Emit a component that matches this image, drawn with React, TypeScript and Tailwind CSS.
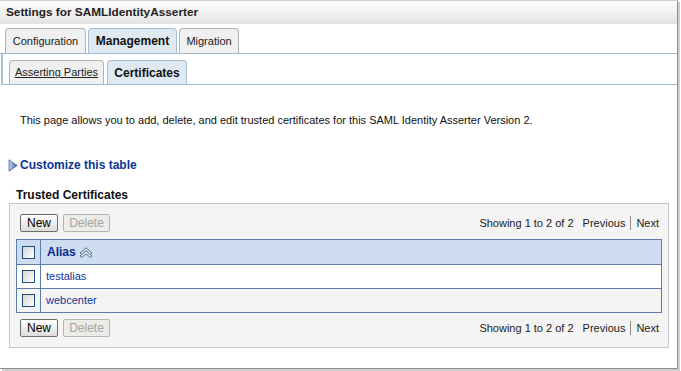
import React from "react";

function Checkbox() {
  return (
    <div className="w-[13px] h-[13px] border border-[#1c4f80] bg-linear-to-br from-[#d4d4ce] to-white" />
  );
}

function SortIcon() {
  return (
    <svg width="14" height="11" viewBox="0 0 14 11" className="ml-[3px]">
      <path d="M1 6 L7 0.8 L13 6 L11.3 7.6 L7 3.8 L2.7 7.6 Z" fill="#e4ebf5" stroke="#566f8e" strokeWidth="1" strokeLinejoin="round" />
      <path d="M1 9 L7 3.8 L13 9 L11.3 10.4 L7 6.8 L2.7 10.4 Z" fill="#e4ebf5" stroke="#566f8e" strokeWidth="1" strokeLinejoin="round" />
    </svg>
  );
}

function Triangle() {
  return (
    <svg width="10" height="13" viewBox="0 0 10 13">
      <defs>
        <linearGradient id="tg" x1="0" y1="0" x2="1" y2="0">
          <stop offset="0" stopColor="#c8d4ec" />
          <stop offset="1" stopColor="#3b5aa8" />
        </linearGradient>
      </defs>
      <path d="M1 0.8 L9.2 6.5 L1 12.2 Z" fill="url(#tg)" stroke="#4a64a8" strokeWidth="0.8" strokeLinejoin="round" />
    </svg>
  );
}

function Buttons() {
  return (
    <div className="flex gap-[5px]">
      <div className="w-[38px] h-[18px] border border-[#6e6e6e] rounded-[2px] bg-linear-to-b from-white to-[#dcdcd8] flex items-center justify-center text-[12px] text-black">
        New
      </div>
      <div className="w-[47px] h-[18px] border border-[#b4b4b0] rounded-[2px] bg-[#ecece8] flex items-center justify-center text-[12px] text-[#a4a4a4]">
        Delete
      </div>
    </div>
  );
}

function Paging() {
  return (
    <div className="flex items-center text-[11px] text-[#222]">
      <span>Showing 1 to 2 of 2</span>
      <span className="ml-[9px]">Previous</span>
      <span className="mx-[5px] w-px h-[14px] bg-[#8a8a8a]" />
      <span>Next</span>
    </div>
  );
}

function ToolbarRow() {
  return (
    <div className="flex items-center justify-between pl-[10px] pr-[9px]">
      <Buttons />
      <Paging />
    </div>
  );
}

export default function App() {
  return (
    <div className="w-[681px] h-[371px] bg-white overflow-hidden font-['Liberation_Sans',Arial,sans-serif]">
      <div className="w-[678px] h-[369px] border-t border-t-[#cfcfcf] border-r border-r-[#8e8e8e] border-b border-b-[#8e8e8e] shadow-[2px_2px_0_#cfcfcf] flex flex-col">
        {/* Header */}
        <div className="h-[23px] bg-linear-to-b from-white to-[#e3e3e1] flex items-center px-[6px] text-[11.8px] font-bold text-[#222]">
          Settings for SAMLIdentityAsserter
        </div>

        {/* Top tabs */}
        <div className="mt-[4px] flex items-end pl-[5px] gap-[2px] border-b border-[#9dbad2]">
          <div className="w-[81px] h-[25px] border border-b-0 border-[#b2b2b2] rounded-t-[4px] bg-[#f0f0f0] flex items-center justify-center text-[11px] text-[#222]">
            Configuration
          </div>
          <div className="w-[89px] h-[25px] border border-b-0 border-[#a4bed6] rounded-t-[4px] bg-[#dfe9f2] flex items-center justify-center text-[12px] font-bold text-[#111]">
            Management
          </div>
          <div className="w-[60px] h-[25px] border border-b-0 border-[#b2b2b2] rounded-t-[4px] bg-[#f0f0f0] flex items-center justify-center text-[11px] text-[#222]">
            Migration
          </div>
        </div>

        {/* Sub tabs */}
        <div className="ml-[1px] border-l-2 border-[#a9c2da]">
          <div className="pt-[6px] flex items-end pl-[6px] gap-[3px] border-b border-[#9dbad2]">
            <div className="w-[95px] h-[24px] border border-b-0 border-[#b2b2b2] rounded-t-[4px] bg-[#f0f0f0] flex items-center justify-center text-[11px] text-[#222] underline">
              Asserting Parties
            </div>
            <div className="w-[80px] h-[24px] border border-b-0 border-[#a4bed6] rounded-t-[4px] bg-[#dfe9f2] flex items-center justify-center text-[12px] font-bold text-[#111]">
              Certificates
            </div>
          </div>
        </div>

        {/* Content */}
        <div className="flex flex-col">
          <div className="mt-[28px] pl-[20px] h-[14px] flex items-center text-[11px] text-[#111]">
            This page allows you to add, delete, and edit trusted certificates for this SAML Identity Asserter Version 2.
          </div>

          <div className="mt-[31px] pl-[8px] h-[14px] flex items-center gap-[2px]">
            <Triangle />
            <span className="text-[12px] font-bold text-[#0b3592]">Customize this table</span>
          </div>

          <div className="mt-[16px] pl-[16px] h-[14px] flex items-center text-[12px] font-bold text-[#111]">
            Trusted Certificates
          </div>

          <div className="mt-[1px] ml-[9px] w-[660px] border border-[#c8c8c8] bg-[#f4f4f4] pt-[10px] pb-[10px]">
            <ToolbarRow />

            <div className="mt-[7px] ml-[6px] w-[646px] border border-[#5a7ea6]">
              <div className="h-[25px] flex bg-[#cddcee] border-b border-[#5a7ea6]">
                <div className="w-[24px] border-r border-[#5a7ea6] flex items-center justify-center">
                  <Checkbox />
                </div>
                <div className="flex items-center pl-[6px]">
                  <span className="text-[12px] font-bold text-[#0a2a8c]">Alias</span>
                  <SortIcon />
                </div>
              </div>
              <div className="h-[24px] flex bg-white border-b border-[#5a7ea6]">
                <div className="w-[24px] border-r border-[#5a7ea6] flex items-center justify-center">
                  <Checkbox />
                </div>
                <div className="flex items-center pl-[5px] text-[11px] text-[#11349a]">testalias</div>
              </div>
              <div className="h-[23px] flex bg-[#f4f4f4]">
                <div className="w-[24px] border-r border-[#5a7ea6] flex items-center justify-center">
                  <Checkbox />
                </div>
                <div className="flex items-center pl-[5px] text-[11px] text-[#11349a]">webcenter</div>
              </div>
            </div>

            <div className="mt-[6px]">
              <ToolbarRow />
            </div>
          </div>
        </div>
      </div>
    </div>
  );
}
